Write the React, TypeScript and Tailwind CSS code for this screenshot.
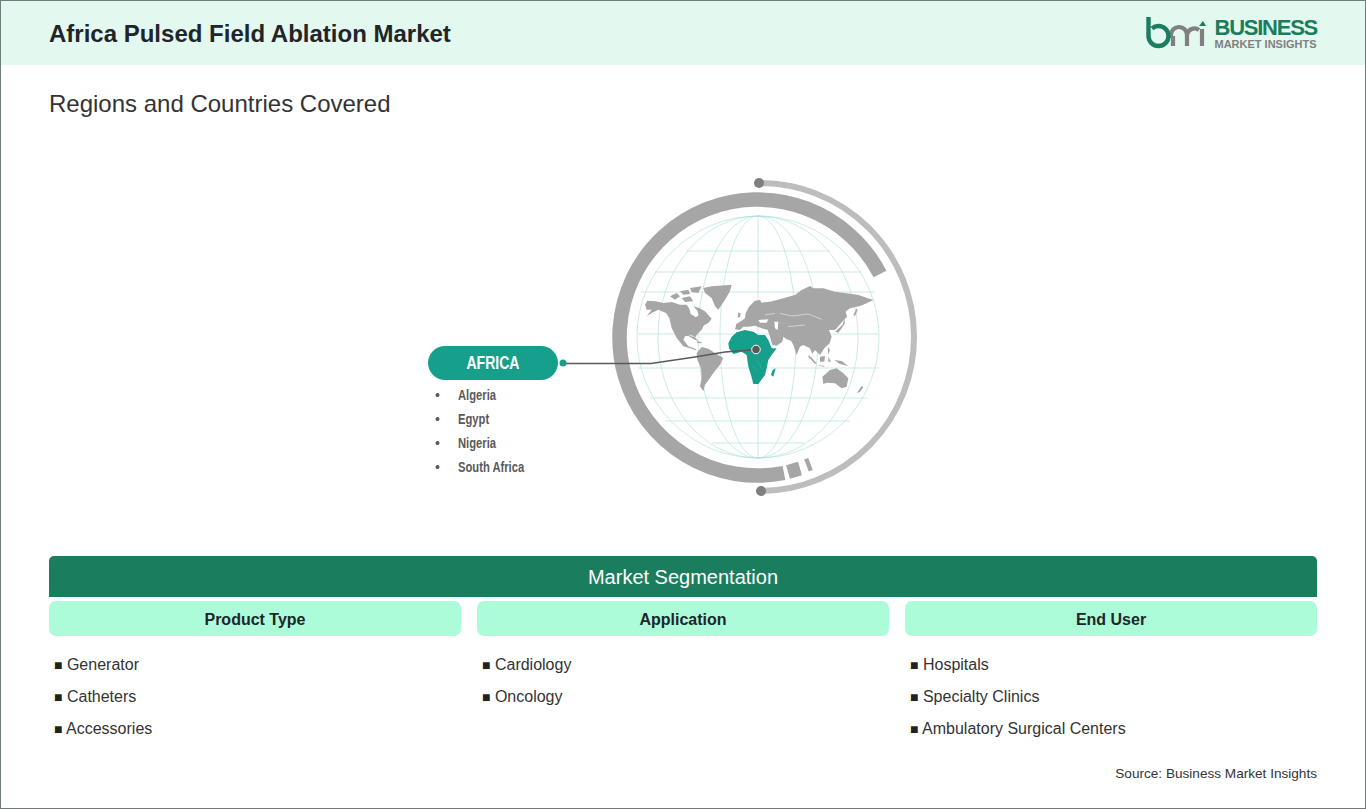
const segments = [
  { title: "Product Type", items: ["Generator", "Catheters", "Accessories"] },
  { title: "Application", items: ["Cardiology", "Oncology"] },
  { title: "End User", items: ["Hospitals", "Specialty Clinics", "Ambulatory Surgical Centers"] },
];

const countries = ["Algeria", "Egypt", "Nigeria", "South Africa"];

const parallels = [
  [686, 830, 251], [655, 861, 272], [641, 875, 292], [638, 878, 334], [638, 879, 368],
  [650, 867, 398], [665, 850, 421], [712, 804, 443],
];

const meridians = [38, 60, 100, 121];

// traced in a 3x grid, see the translate/scale on each group
const americas = [
  "M15 80 L22 68 L48 70 L70 75 L95 72 L120 80 L140 80 L148 92 L152 108 L168 118 L176 112 L172 98 L160 85 L178 90 L195 100 L215 122 L205 135 L192 142 L185 155 L172 168 L166 178 L155 172 L135 175 L130 185 L145 205 L165 212 L170 218 L155 212 L130 205 L110 180 L95 150 L88 120 L78 105 L55 95 L35 105 L20 115 L35 95 L20 95 Z",
  "M90 55 L110 45 L120 55 L105 65 Z",
  "M120 40 L145 35 L150 48 L130 50 Z",
  "M150 30 L185 25 L175 45 L155 42 Z",
  "M125 60 L150 55 L160 70 L135 72 Z",
  "M190 30 L215 25 L275 20 L270 40 L255 65 L235 95 L225 85 L215 60 L195 45 Z",
  "M140 170 L165 178 L175 190 L160 183 Z",
  "M170 190 L185 192 L183 196 L172 195 Z",
  "M170 225 L185 207 L205 212 L225 225 L250 240 L240 260 L220 285 L210 300 L195 320 L190 340 L180 325 L185 300 L183 270 L172 245 Z",
];

const oldWorld = [
  "M30 148 L34 132 L50 122 L60 115 L62 100 L72 80 L90 62 L105 60 L110 68 L135 65 L165 58 L190 50 L210 45 L230 30 L255 18 L265 25 L295 25 L330 35 L365 40 L400 45 L445 60 L425 70 L405 78 L375 85 L362 95 L366 110 L348 130 L330 150 L312 150 L320 170 L314 190 L298 205 L285 225 L270 210 L262 222 L255 205 L235 195 L225 200 L215 225 L205 195 L198 182 L185 178 L175 170 L172 185 L155 197 L142 195 L135 170 L128 150 L110 145 L90 137 L70 140 L55 140 L45 150 Z",
  "M40 97 L47 100 L45 112 L38 112 Z",
  "M350 145 L360 130 L358 118 L352 135 L330 155 L340 158 Z",
  "M385 105 L395 85 L398 90 L390 108 Z",
  "M308 200 L315 210 L310 225 Z",
  "M252 225 L275 250 L270 252 L250 230 Z",
  "M285 230 L300 228 L298 245 L285 245 Z",
  "M275 255 L300 258 L295 260 Z",
  "M310 230 L318 245 L310 245 Z",
  "M328 240 L350 243 L370 258 L345 252 Z",
  "M292 290 L315 270 L335 265 L355 280 L370 295 L365 320 L350 325 L330 310 L305 308 L295 312 Z",
  "M395 340 L410 318 L415 322 L405 335 Z",
];

const BmiLogo = () => (
  <svg width="60" height="34" viewBox="0 0 60 34" fill="none">
    <path d="M25 22 V19 A8 8 0 0 1 41 19 V30" stroke="#808080" strokeWidth="4.2" />
    <path d="M27 30 V20" stroke="#808080" strokeWidth="4.2" />
    <path d="M41 19 A7.5 7.5 0 0 1 53 14" stroke="#808080" strokeWidth="4.2" />
    <path d="M2.5 1 V20 A10 10 0 1 0 12.5 10 A10 10 0 0 0 6 12.5" stroke="#1a7e5e" strokeWidth="4.4" />
    <path d="M56 13 V30" stroke="#808080" strokeWidth="4.2" />
    <path d="M53 10 L57 5 L60 10 Z" fill="#1a7e5e" />
  </svg>
);

const GlobeArt = () => (
  <svg className="shrink-0" width="362" height="330" viewBox="558 170 362 330" fill="none">
    {/* rings */}
    <path d="M880 274 A138 138 0 1 0 784 473" stroke="#a6a6a6" strokeWidth="14.5" />
    <path d="M788 472 L800 468.5" stroke="#a6a6a6" strokeWidth="14" />
    <path d="M806.5 465.5 L810.5 464" stroke="#a6a6a6" strokeWidth="13" />
    <path d="M759 183 A154 154 0 0 1 761 491" stroke="#bdbdbd" strokeWidth="6" />
    <circle cx="759" cy="183" r="5" fill="#7f7f7f" />
    <circle cx="761" cy="491" r="5" fill="#7f7f7f" />
    {/* graticule */}
    <g stroke="#a8ddd6" strokeWidth="0.6">
      {meridians.map((rx) => (
        <ellipse key={rx} cx="758" cy="337" rx={rx} ry="121" />
      ))}
      <path d="M758 216 V458" />
      {parallels.map(([x1, x2, y]) => (
        <path key={y} d={`M${x1} ${y} H${x2}`} />
      ))}
    </g>
    {/* continents */}
    <g transform="translate(640 278) scale(0.3333)" fill="#a6a6a6">
      {americas.map((d) => (
        <path key={d} d={d} />
      ))}
    </g>
    <g transform="translate(725 280) scale(0.3333)">
      <g fill="#a6a6a6">
        {oldWorld.map((d) => (
          <path key={d} d={d} />
        ))}
      </g>
      <path d="M100 120 L130 118 L125 128 L105 128 Z M148 125 L160 125 L158 150 L150 145 Z" fill="#fff" />
      <path d="M165 100 L200 108 L250 102 L290 118 M120 105 L150 100 M190 140 L240 135" stroke="#fff" strokeWidth="1.5" />
      {/* africa */}
      <path
        d="M10 190 L20 170 L35 157 L60 150 L85 155 L100 165 L120 165 L130 180 L140 205 L155 205 L140 225 L130 240 L125 265 L120 285 L100 312 L85 312 L78 285 L70 260 L65 225 L50 215 L25 222 L12 205 Z"
        fill="#16a08c"
      />
      <path d="M152 265 L145 290 L138 285 L143 270 Z" fill="#16a08c" />
      <path d="M95 240 L110 265 M80 255 L100 275" stroke="#5fc4b4" strokeWidth="1" />
    </g>
    {/* connector */}
    <circle cx="563" cy="363" r="3.5" fill="#16a08c" />
    <path d="M566 363.5 H651 L695 357 L725 352 L756 349.5" stroke="#595959" strokeWidth="1.4" />
    <circle cx="756" cy="349.5" r="4.3" fill="#595959" stroke="#fff" strokeWidth="1" />
  </svg>
);

export default function App() {
  return (
    <div className="h-[809px] w-[1366px] border border-[#6f7d7d] bg-white font-['Liberation_Sans',sans-serif]">
      <header className="flex h-[64px] items-center justify-between bg-[#e3f8ef] pr-[48px] pl-[48px]">
        <h1 className="pt-[1px] text-[24px] font-bold text-[#212529]">Africa Pulsed Field Ablation Market</h1>
        <div className="flex items-center gap-[9px]">
          <BmiLogo />
          <div className="flex flex-col leading-none font-bold">
            <span className="text-[22px] tracking-[-1.25px] text-[#1a7e5e]">BUSINESS</span>
            <span className="text-[11px] text-[#7f7f7f]">MARKET INSIGHTS</span>
          </div>
        </div>
      </header>

      <div className="px-[48px]">
        <h2 className="mt-[23px] text-[24px] leading-[32px] text-[#333]">Regions and Countries Covered</h2>

        <div className="mt-[50px] flex h-[330px] justify-center pr-[18px]">
          <div className="w-[130px] shrink-0 pt-[176px]">
            <div className="flex h-[34px] items-center justify-center rounded-full bg-[#16a08c]">
              <span className="scale-x-[0.78] text-[18px] font-bold text-white">AFRICA</span>
            </div>
            <ul className="mt-[3px]">
              {countries.map((c) => (
                <li key={c} className="flex h-[24px] items-center text-[#595959]">
                  <span className="w-[30px] pl-[7px] text-[14px]">•</span>
                  <span className="origin-left scale-x-[0.8] text-[14px] font-bold whitespace-nowrap">{c}</span>
                </li>
              ))}
            </ul>
          </div>
          <GlobeArt />
        </div>

        <div className="mt-[56px] flex h-[41px] items-center justify-center rounded-t-[5px] bg-[#1a7e5e] text-[20px] text-white">
          Market Segmentation
        </div>
        <div className="mt-[4px] grid grid-cols-3 gap-[16px]">
          {segments.map((s) => (
            <div key={s.title}>
              <div className="flex h-[35px] items-center justify-center rounded-[7px] bg-[#adfcd9] pt-[3px] text-[16px] font-bold text-[#212529]">
                {s.title}
              </div>
              <ul className="mt-[13px] pl-[5px] text-[16px] text-[#333]">
                {s.items.map((item) => (
                  <li key={item} className="h-[32px] leading-[32px]">
                    <span className="text-[14px] text-[#222]">■</span> {item}
                  </li>
                ))}
              </ul>
            </div>
          ))}
        </div>
        <p className="mt-[19px] text-right text-[13.6px] text-[#333]">Source: Business Market Insights</p>
      </div>
    </div>
  );
}
